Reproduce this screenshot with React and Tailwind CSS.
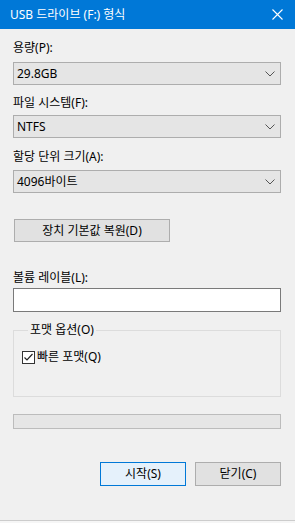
// App.jsx - USB drive format dialog
import React from 'react';

const font = "font-['Noto_Sans','Noto_Sans_CJK_KR',sans-serif]";

const Chevron = () => (
  <svg width="10" height="6" viewBox="0 0 10 6" className="shrink-0">
    <path d="M0.5 0.5 L5 5 L9.5 0.5" fill="none" stroke="#555" strokeWidth="1" />
  </svg>
);

const Combo = ({ value, className = '' }) => (
  <div
    className={`h-[23px] w-[268px] flex items-center justify-between pl-[3px] pr-[5px] bg-[#e5e5e5] border border-[#adadad] ${className}`}
  >
    <span className="text-[12px] leading-[16px] text-black">{value}</span>
    <Chevron />
  </div>
);

const Label = ({ children, className = '' }) => (
  <div className={`text-[12px] leading-[16px] text-black ${className}`}>{children}</div>
);

export default function App() {
  return (
    <div className={`w-[295px] h-[523px] bg-[#f6f6f6] ${font}`}>
      <div className="h-[521px] flex flex-col bg-[#f0f0f0] border-b border-[#cccccc]">
        {/* Title bar */}
        <div className="h-[29px] shrink-0 bg-[#0078d7] flex items-center justify-between pl-[10px] pr-[12px]">
          <span className="text-[12px] leading-[16px] text-white">USB 드라이브 (F:) 형식</span>
          <svg width="11" height="11" viewBox="0 0 11 11">
            <path d="M0.5 0.5 L10.5 10.5 M10.5 0.5 L0.5 10.5" stroke="#fff" strokeWidth="1.1" />
          </svg>
        </div>

        {/* Body */}
        <div className="flex flex-col pl-[13px] pr-[14px] pt-[11px]">
          <Label>용량(P):</Label>
          <Combo value="29.8GB" className="mt-[6px]" />

          <Label className="mt-[10px]">파일 시스템(F):</Label>
          <Combo value="NTFS" className="mt-[4px]" />

          <Label className="mt-[11px]">할당 단위 크기(A):</Label>
          <Combo value="4096바이트" className="mt-[5px]" />

          <button className="mt-[26px] ml-[1px] w-[156px] h-[23px] bg-[#e1e1e1] border border-[#adadad] text-[12px] leading-[16px] text-black">
            장치 기본값 복원(D)
          </button>

          <Label className="mt-[28px]">볼륨 레이블(L):</Label>
          <div className="mt-[2px] w-[268px] h-[24px] bg-white border border-[#7a7a7a]" />

          {/* Format options */}
          <fieldset className="mt-[10px] w-[268px] border border-[#dcdcdc] pl-[8px] pb-[31px]">
            <legend className="ml-[6px] px-[2px] text-[12px] leading-[16px] text-black">포맷 옵션(O)</legend>
            <div className="mt-[11px] flex items-center h-[16px]">
              <div className="w-[13px] h-[13px] bg-white border border-[#333333] flex items-center justify-center">
                <svg width="11" height="11" viewBox="0 0 11 11">
                  <path d="M1.5 5.5 L4 8 L9.5 2" fill="none" stroke="#222" strokeWidth="1.2" />
                </svg>
              </div>
              <span className="ml-[2px] text-[12px] leading-[16px] text-black">빠른 포맷(Q)</span>
            </div>
          </fieldset>

          {/* Progress */}
          <div className="mt-[17px] w-[268px] h-[15px] bg-[#e6e6e6] border border-[#bcbcbc]" />

          {/* Actions */}
          <div className="mt-[33px] w-[268px] flex justify-end gap-[9px]">
            <button className="w-[86px] h-[24px] bg-[#e5f1fb] border border-[#0078d7] text-[12px] leading-[16px] text-black">
              시작(S)
            </button>
            <button className="w-[86px] h-[24px] bg-[#e1e1e1] border border-[#adadad] text-[12px] leading-[16px] text-black">
              닫기(C)
            </button>
          </div>
        </div>
      </div>
    </div>
  );
}
